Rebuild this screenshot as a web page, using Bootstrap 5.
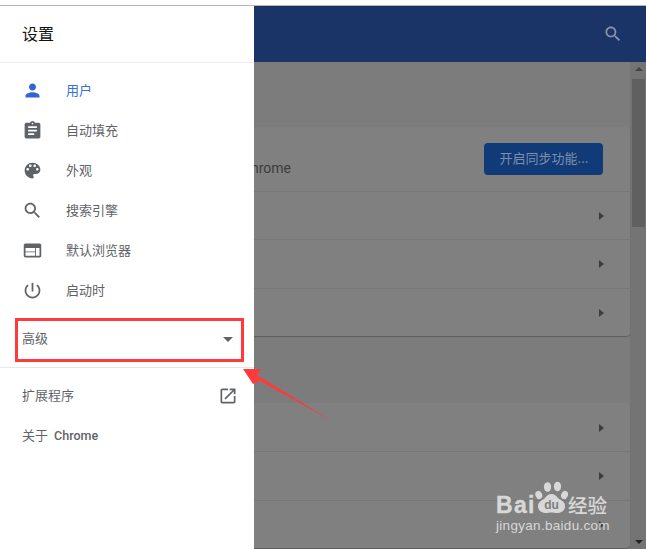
<!DOCTYPE html>
<html lang="zh-CN">
<head>
<meta charset="utf-8">
<title>设置</title>
<link href="https://cdn.jsdelivr.net/npm/bootstrap@5.3.0/dist/css/bootstrap.min.css" rel="stylesheet">
<style>
html,body{height:100%;overflow:hidden;}
body{font-family:"Liberation Sans","Noto Sans CJK SC",sans-serif;font-size:13px;background:#fff;}
.shot{height:549px;width:646px;position:relative;overflow:hidden;padding-top:5px;}
.app{height:544px;border-top:1px solid #b5b5b5;}
.topbar{height:56px;background:#1a3468;padding-right:23px;}
.topbar svg{width:20px;height:20px;fill:#8a95ab;}
.stage{height:487px;background:#7c7c7c;}
.pane{padding:65px 0 0 16px;}
.setbox{background:#808080;border:0;border-radius:4px;box-shadow:0 1px 1px #5d5d5d;color:#3d3d3d;}
.setbox + .setbox{margin-top:67px;}
.setrow{border-top:1px solid #777;padding-right:26px;background:transparent;}
.setrow:first-child{border-top:0;}
.r48{height:48.330px;}
.r64{height:64px;padding-right:27px;}
.acct{width:275px;text-align:right;padding-top:18px;font-family:Roboto,"Noto Sans CJK SC",sans-serif;font-size:14px;color:#3c3c3c;}
.syncbtn{width:119px;height:32px;background:#113a78;border:0;border-radius:4px;color:#7f8ea9;font-size:13px;padding:0 0 2px 1px;font-family:"Noto Sans CJK SC",sans-serif;}
.tri{width:0;height:0;border-top:4.500px solid transparent;border-bottom:4.500px solid transparent;border-left:5px solid #3d3d3d;margin-top:1px;}
.scrollcol{width:16px;background:#747474;padding:0 1px 0 2px;}
.thumb{height:148px;background:#606060;margin-top:3px;}
.sarrow{height:14px;}
.sarrow i{display:block;width:0;height:0;border-left:4px solid transparent;border-right:4px solid transparent;}
.up i{border-bottom:4px solid #444;}
.down i{border-top:4px solid #222;}
.drawer{position:absolute;left:0;top:6px;bottom:0;width:254px;background:#fff;}
.dhead{height:57px;border-bottom:1px solid #eee;padding:0 0 3px 22px;font-family:"Noto Sans CJK SC",sans-serif;font-size:16px;color:#111;}
.dmenu{padding-top:7px;}
.ditem{height:40px;padding:0 0 1px 22px;border:0;background:transparent;color:#5f6368;font-family:"Noto Sans CJK SC",sans-serif;font-size:13px;}
.ditem svg{width:21px;height:21px;fill:#5f6368;margin:1px 23px 0 0;flex:none;}
.ditem.on{color:#3a6fd8;}
.ditem.on svg{fill:#2f66d4;}
.advbox{height:44px;margin:8px 10px 0 15px;border:3px solid #ff3a3a;padding:0 8px 0 4px;color:#5f6368;font-family:"Noto Sans CJK SC",sans-serif;font-size:13px;}
.advtxt{padding-bottom:5px;}
.caret{width:0;height:0;border-left:5px solid transparent;border-right:5px solid transparent;border-top:5px solid #5f6368;margin-bottom:2px;}
.dline{border-top:1px solid #e8e8e8;margin-top:5px;padding-top:8px;}
.dextra{height:40px;padding:0 16px 0 22px;color:#5f6368;font-family:"Noto Sans CJK SC",sans-serif;font-size:13px;}
.dextra svg{width:20px;height:20px;fill:#5f6368;}
.dtxt{padding-bottom:2px;}
.rom{font-family:Roboto,"Noto Sans CJK SC",sans-serif;font-weight:500;font-size:12.500px;word-spacing:3px;}
.rom b{font-size:13px;font-weight:400;}
.callout{position:absolute;left:240px;top:365px;width:95px;height:60px;}
.mark-wm{position:absolute;left:496px;top:479px;width:116px;color:#d8d8d8;line-height:1;}
.wm-top{height:38px;}
.wm-bai{font-family:"Liberation Sans",sans-serif;font-weight:700;font-size:23px;padding-top:15px;letter-spacing:1.300px;width:39px;flex:none;-webkit-text-stroke:.4px #d8d8d8;}
.wm-paw{width:33px;height:38px;flex:none;}
.wm-cn{font-family:"Noto Sans CJK SC",sans-serif;font-size:19.500px;padding-top:16px;font-weight:500;white-space:nowrap;}
.wm-url{font-family:"Liberation Sans",sans-serif;font-size:13.500px;margin-top:2px;white-space:nowrap;letter-spacing:.3px;}
</style>
</head>
<body>
<div class="shot">
  <div class="app">
    <div class="topbar d-flex align-items-center justify-content-end">
      <svg viewBox="0 0 24 24"><path d="M15.500 14h-.790l-.280-.270C15.410 12.590 16 11.110 16 9.500 16 5.910 13.090 3 9.500 3S3 5.910 3 9.500 5.910 16 9.500 16c1.610 0 3.090-.590 4.230-1.570l.270.280v.790l5 4.990L20.490 19l-4.990-5zm-6 0C7.010 14 5 11.990 5 9.500S7.010 5 9.500 5 14 7.010 14 9.500 11.990 14 9.500 14z"/></svg>
    </div>
    <div class="stage d-flex">
      <div class="pane flex-grow-1">
        <div class="card setbox">
          <div class="setrow r64 d-flex justify-content-between align-items-center">
            <div class="acct">Chrome</div>
            <button class="btn syncbtn" type="button">开启同步功能...</button>
          </div>
          <div class="setrow r48 d-flex justify-content-end align-items-center"><span class="tri"></span></div>
          <div class="setrow r48 d-flex justify-content-end align-items-center"><span class="tri"></span></div>
          <div class="setrow r48 d-flex justify-content-end align-items-center"><span class="tri"></span></div>
        </div>
        <div class="card setbox">
          <div class="setrow r48 d-flex justify-content-end align-items-center"><span class="tri"></span></div>
          <div class="setrow r48 d-flex justify-content-end align-items-center"><span class="tri"></span></div>
          <div class="setrow r48 d-flex justify-content-end align-items-center"><span class="tri"></span></div>
        </div>
      </div>
      <div class="scrollcol d-flex flex-column">
        <div class="sarrow up d-flex align-items-center justify-content-center"><i></i></div>
        <div class="thumb"></div>
        <div class="flex-grow-1"></div>
        <div class="sarrow down d-flex align-items-center justify-content-center"><i></i></div>
      </div>
    </div>
  </div>

  <div class="mark-wm">
    <div class="wm-top d-flex">
      <span class="wm-bai">Bai</span>
      <svg class="wm-paw" viewBox="0 0 33 38">
        <g fill="#d8d8d8">
          <ellipse cx="3.800" cy="16" rx="3.300" ry="4.200" transform="rotate(-25 3.800 16)"/>
          <ellipse cx="12.500" cy="8" rx="3.600" ry="4.800"/>
          <ellipse cx="22.500" cy="7.500" rx="3.600" ry="4.800"/>
          <ellipse cx="29.500" cy="16" rx="3.300" ry="4.200" transform="rotate(25 29.500 16)"/>
          <path d="M16.500 15c-3 0-5 2-6.500 4-2 2-7 3-7 8 0 5 4 7 8 7 2 0 3.500-.5 5.500-.5s3.500.5 5.500.5c4 0 8-2 8-7 0-5-5-6-7-8-1.500-2-3.500-4-6.500-4z"/>
        </g>
        <text x="16.500" y="30" text-anchor="middle" font-family="Liberation Sans" font-size="12" font-weight="700" fill="#7d7d7d">du</text>
      </svg>
      <span class="wm-cn">经验</span>
    </div>
    <div class="wm-url">jingyan.baidu.com</div>
  </div>

  <aside class="drawer">
    <div class="dhead d-flex align-items-center">设置</div>
    <div class="dmenu list-group list-group-flush">
      <a class="list-group-item ditem on d-flex align-items-center"><svg viewBox="0 0 24 24"><path d="M12 12c2.210 0 4-1.790 4-4s-1.790-4-4-4-4 1.790-4 4 1.790 4 4 4zm0 2c-2.670 0-8 1.340-8 4v2h16v-2c0-2.660-5.330-4-8-4z"/></svg>用户</a>
      <a class="list-group-item ditem d-flex align-items-center"><svg viewBox="0 0 24 24"><path d="M19 3h-4.180C14.400 1.840 13.300 1 12 1c-1.300 0-2.400.840-2.820 2H5c-1.100 0-2 .900-2 2v14c0 1.100.900 2 2 2h14c1.100 0 2-.900 2-2V5c0-1.100-.900-2-2-2zm-7 0c.550 0 1 .450 1 1s-.450 1-1 1-1-.450-1-1 .450-1 1-1zm2 14H7v-2h7v2zm3-4H7v-2h10v2zm0-4H7V7h10v2z"/></svg>自动填充</a>
      <a class="list-group-item ditem d-flex align-items-center"><svg viewBox="0 0 24 24"><path d="M12 3c-4.970 0-9 4.030-9 9s4.030 9 9 9c.830 0 1.500-.670 1.500-1.500 0-.390-.150-.740-.390-1.010-.230-.260-.380-.610-.380-.990 0-.830.670-1.500 1.500-1.500H16c2.760 0 5-2.240 5-5 0-4.420-4.030-8-9-8zm-5.500 9c-.830 0-1.500-.670-1.500-1.500S5.670 9 6.500 9 8 9.670 8 10.500 7.330 12 6.500 12zm3-4C8.670 8 8 7.330 8 6.500S8.670 5 9.500 5s1.500.670 1.500 1.500S10.330 8 9.500 8zm5 0c-.830 0-1.500-.670-1.500-1.500S13.670 5 14.500 5s1.500.670 1.500 1.500S15.330 8 14.500 8zm3 4c-.830 0-1.500-.670-1.500-1.500S16.670 9 17.500 9s1.500.670 1.500 1.500-.670 1.500-1.500 1.500z"/></svg>外观</a>
      <a class="list-group-item ditem d-flex align-items-center"><svg viewBox="0 0 24 24"><path d="M15.500 14h-.790l-.280-.270C15.410 12.590 16 11.110 16 9.500 16 5.910 13.090 3 9.500 3S3 5.910 3 9.500 5.910 16 9.500 16c1.610 0 3.090-.590 4.230-1.570l.270.280v.790l5 4.990L20.490 19l-4.990-5zm-6 0C7.010 14 5 11.990 5 9.500S7.010 5 9.500 5 14 7.010 14 9.500 11.990 14 9.500 14z"/></svg>搜索引擎</a>
      <a class="list-group-item ditem d-flex align-items-center"><svg viewBox="0 0 24 24"><path d="M20 4H4c-1.100 0-2 .900-2 2v12c0 1.100.900 2 2 2h16c1.100 0 2-.900 2-2V6c0-1.100-.900-2-2-2zm-5 14H4v-4h11v4zm0-5H4V9h11v4zm5 5h-4V9h4v9z"/></svg>默认浏览器</a>
      <a class="list-group-item ditem d-flex align-items-center"><svg viewBox="0 0 24 24"><path d="M13 3h-2v10h2V3zm4.830 2.170l-1.420 1.420C17.990 7.860 19 9.810 19 12c0 3.870-3.130 7-7 7s-7-3.130-7-7c0-2.190 1.010-4.140 2.580-5.420L6.170 5.170C4.230 6.820 3 9.260 3 12c0 4.970 4.030 9 9 9s9-4.030 9-9c0-2.740-1.230-5.180-3.170-6.830z"/></svg>启动时</a>
    </div>
    <div class="advbox d-flex align-items-center justify-content-between"><span class="advtxt">高级</span><span class="caret"></span></div>
    <div class="dline">
      <div class="dextra d-flex align-items-center justify-content-between"><span class="dtxt">扩展程序</span><svg viewBox="0 0 24 24"><path d="M19 19H5V5h7V3H5c-1.110 0-2 .900-2 2v14c0 1.100.890 2 2 2h14c1.100 0 2-.900 2-2v-7h-2v7zM14 3v2h3.590l-9.830 9.830 1.410 1.410L19 6.410V10h2V3h-7z"/></svg></div>
      <div class="dextra d-flex align-items-center"><span class="rom"><b>关于</b> Chrome</span></div>
    </div>
  </aside>

  <svg class="callout" viewBox="240 365 95 60"><polygon points="243,369 261,369 257,375 332,421 260,381 253,384" fill="#ff3a3a"/></svg>
</div>
<script src="https://cdn.jsdelivr.net/npm/bootstrap@5.3.0/dist/js/bootstrap.bundle.min.js"></script>
</body>
</html>
